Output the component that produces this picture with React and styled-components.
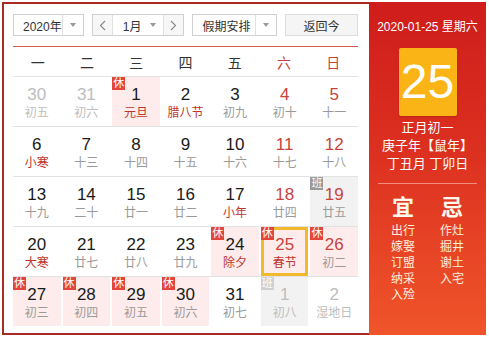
import React from 'react'
import styled, { createGlobalStyle, css } from 'styled-components'

const GlobalStyle = createGlobalStyle`
  html, body {
    margin: 0;
    padding: 0;
    background: #fff;
  }
  body {
    font-family: "Liberation Sans", "Noto Sans CJK SC", sans-serif;
  }
`

const Wrapper = styled.div`
  display: flex;
  margin: 2px;
  width: 484px;
  height: 333px;
`

const LeftPanel = styled.div`
  box-sizing: border-box;
  width: 367px;
  height: 333px;
  border: 2px solid #a82a22;
  border-right: none;
  padding: 10px 11px 7px 9px;
  background: #fff;
`

const Toolbar = styled.div`
  display: flex;
  align-items: center;
  height: 22px;
  margin-bottom: 10px;
`

const Select = styled.div`
  box-sizing: border-box;
  display: flex;
  align-items: stretch;
  height: 22px;
  width: ${({ $width }) => $width}px;
  margin-right: ${({ $gap }) => $gap}px;
  border: 1px solid #d0d0d0;
  background: #fff;
  font-size: 12px;
  color: #333;
`

const SelectText = styled.div`
  flex: 1;
  display: flex;
  align-items: center;
  padding-left: ${({ $pad }) => $pad}px;
  white-space: nowrap;
`

const ArrowBox = styled.div`
  width: 20px;
  display: flex;
  align-items: center;
  justify-content: center;
  border-left: ${({ $line }) => ($line ? '1px solid #e0e0e0' : 'none')};
  &::after {
    content: '';
    border-left: 3.5px solid transparent;
    border-right: 3.5px solid transparent;
    border-top: 4px solid #999;
  }
`

const NavButton = styled.div`
  width: 19px;
  display: flex;
  align-items: center;
  justify-content: center;
  background: #f7f7f7;
  ${({ $side }) =>
    $side === 'left'
      ? css`border-right: 1px solid #e0e0e0;`
      : css`border-left: 1px solid #e0e0e0;`}
`

const TodayButton = styled.div`
  box-sizing: border-box;
  width: 73px;
  height: 22px;
  display: flex;
  align-items: center;
  justify-content: center;
  border: 1px solid #dcdcdc;
  background: #f5f5f5;
  font-size: 12px;
  color: #333;
`

const WeekHeader = styled.div`
  display: grid;
  grid-template-columns: repeat(7, 1fr);
  height: 29px;
  border-top: 1px solid #d55a50;
`

const WeekDay = styled.div`
  display: flex;
  align-items: center;
  justify-content: center;
  font-size: 14px;
  color: ${({ $weekend }) => ($weekend ? '#c9433c' : '#333')};
`

const Row = styled.div`
  display: grid;
  grid-template-columns: repeat(7, 1fr);
  column-gap: 2px;
  height: 49px;
  border-top: 1px solid #e2e2e2;
`

const Cell = styled.div`
  position: relative;
  height: 49px;
  text-align: center;
  background: ${({ $bg }) => $bg};
  ${({ $selected }) =>
    $selected &&
    css`
      box-shadow: inset 0 0 0 3px #f1b92d;
    `}
`

const DayNum = styled.div`
  padding-top: 8px;
  font-size: 17px;
  line-height: 20px;
  color: ${({ $color }) => $color};
`

const Lunar = styled.div`
  font-size: 12px;
  line-height: 16px;
  color: ${({ $color }) => $color};
`

const Badge = styled.span`
  position: absolute;
  top: 0;
  left: 0;
  width: 13px;
  height: 13px;
  font-size: 11px;
  line-height: 13px;
  text-align: center;
  color: #fff;
  background: ${({ $bg }) => $bg};
`

const RightPanel = styled.div`
  box-sizing: border-box;
  width: 117px;
  height: 333px;
  padding-top: 17px;
  background: linear-gradient(180deg, #cf1d1b 0%, #dc3020 45%, #f0552a 100%);
  color: #fff;
  text-align: center;
`

const DateLine = styled.div`
  font-size: 12px;
  line-height: 16px;
  white-space: nowrap;
`

const BigDay = styled.div`
  width: 58px;
  height: 68px;
  margin: 13px auto 3px;
  border-radius: 2px;
  background: #fbb416;
  box-shadow: 0 1px 2px rgba(120, 20, 0, 0.3);
  font-size: 48px;
  line-height: 68px;
  color: #fff;
`

const InfoLine = styled.div`
  font-size: 13px;
  line-height: 18px;
  white-space: nowrap;
`

const Divider = styled.div`
  width: 99px;
  height: 1px;
  margin: 10px auto 0;
  background: rgba(255, 200, 190, 0.6);
`

const Almanac = styled.div`
  display: grid;
  grid-template-columns: 49px 49px;
  justify-content: center;
  margin-top: 11px;
`

const AlmanacCol = styled.div`
  display: flex;
  flex-direction: column;
  align-items: center;
`

const AlmanacTitle = styled.div`
  font-size: 22px;
  font-weight: bold;
  line-height: 26px;
  margin-bottom: 2px;
  color: #fff8ee;
`

const AlmanacItem = styled.div`
  font-size: 12px;
  line-height: 16px;
  color: #ffeede;
`

const Chevron = ({ dir }) => (
  <svg width="7" height="11" viewBox="0 0 7 11">
    <polyline
      points={dir === 'left' ? '6,1 1.5,5.5 6,10' : '1,1 5.5,5.5 1,10'}
      fill="none"
      stroke="#888"
      strokeWidth="1.1"
    />
  </svg>
)

const RED = '#c9433c'
const FEST = '#c0352d'
const GRAY = '#9a9a9a'
const PALE = '#bdbdbd'
const HOLIDAY_BG = '#fdeceb'
const WORK_BG = '#f2f2f2'

// n: day, l: lunar, o: other month, w: weekend, f: festival, h: 休, b: 班, s: selected
const weeks = [
  [
    { n: 30, l: '初五', o: 1 },
    { n: 31, l: '初六', o: 1 },
    { n: 1, l: '元旦', f: 1, h: 1 },
    { n: 2, l: '腊八节', f: 1 },
    { n: 3, l: '初九' },
    { n: 4, l: '初十', w: 1 },
    { n: 5, l: '十一', w: 1 },
  ],
  [
    { n: 6, l: '小寒', f: 1 },
    { n: 7, l: '十三' },
    { n: 8, l: '十四' },
    { n: 9, l: '十五' },
    { n: 10, l: '十六' },
    { n: 11, l: '十七', w: 1 },
    { n: 12, l: '十八', w: 1 },
  ],
  [
    { n: 13, l: '十九' },
    { n: 14, l: '二十' },
    { n: 15, l: '廿一' },
    { n: 16, l: '廿二' },
    { n: 17, l: '小年', f: 1 },
    { n: 18, l: '廿四', w: 1 },
    { n: 19, l: '廿五', w: 1, b: 1 },
  ],
  [
    { n: 20, l: '大寒', f: 1 },
    { n: 21, l: '廿七' },
    { n: 22, l: '廿八' },
    { n: 23, l: '廿九' },
    { n: 24, l: '除夕', f: 1, h: 1 },
    { n: 25, l: '春节', f: 1, h: 1, w: 1, s: 1 },
    { n: 26, l: '初二', h: 1, w: 1 },
  ],
  [
    { n: 27, l: '初三', h: 1 },
    { n: 28, l: '初四', h: 1 },
    { n: 29, l: '初五', h: 1 },
    { n: 30, l: '初六', h: 1 },
    { n: 31, l: '初七' },
    { n: 1, l: '初八', o: 1, b: 1 },
    { n: 2, l: '湿地日', o: 1 },
  ],
]

const weekNames = ['一', '二', '三', '四', '五', '六', '日']
const yi = ['出行', '嫁娶', '订盟', '纳采', '入殓']
const ji = ['作灶', '掘井', '谢土', '入宅']

function DayCell({ d }) {
  let bg = 'transparent'
  if (d.h) bg = HOLIDAY_BG
  if (d.b) bg = WORK_BG
  const numColor = d.o ? PALE : d.w ? RED : '#1a1a1a'
  const lunarColor = d.o ? PALE : d.f ? FEST : GRAY
  return (
    <Cell $bg={bg} $selected={!!d.s}>
      {d.h ? <Badge $bg="#e2463b">休</Badge> : null}
      {d.b ? <Badge $bg={d.o ? '#cfcfcf' : '#999'}>班</Badge> : null}
      <DayNum $color={numColor}>{d.n}</DayNum>
      <Lunar $color={lunarColor}>{d.l}</Lunar>
    </Cell>
  )
}

export default function App() {
  return (
    <>
      <GlobalStyle />
      <Wrapper>
        <LeftPanel>
          <Toolbar>
            <Select $width={71} $gap={8}>
              <SelectText $pad={9}>2020年</SelectText>
              <ArrowBox $line />
            </Select>
            <Select $width={93} $gap={8}>
              <NavButton $side="left">
                <Chevron dir="left" />
              </NavButton>
              <SelectText $pad={10}>1月</SelectText>
              <ArrowBox />
              <NavButton $side="right">
                <Chevron dir="right" />
              </NavButton>
            </Select>
            <Select $width={85} $gap={8}>
              <SelectText $pad={9}>假期安排</SelectText>
              <ArrowBox $line />
            </Select>
            <TodayButton>返回今</TodayButton>
          </Toolbar>
          <WeekHeader>
            {weekNames.map((w, i) => (
              <WeekDay key={w} $weekend={i > 4}>
                {w}
              </WeekDay>
            ))}
          </WeekHeader>
          {weeks.map((week, i) => (
            <Row key={i}>
              {week.map((d, j) => (
                <DayCell key={j} d={d} />
              ))}
            </Row>
          ))}
        </LeftPanel>
        <RightPanel>
          <DateLine>2020-01-25 星期六</DateLine>
          <BigDay>25</BigDay>
          <InfoLine>正月初一</InfoLine>
          <InfoLine>庚子年【鼠年】</InfoLine>
          <InfoLine>丁丑月 丁卯日</InfoLine>
          <Divider />
          <Almanac>
            <AlmanacCol>
              <AlmanacTitle>宜</AlmanacTitle>
              {yi.map((t) => (
                <AlmanacItem key={t}>{t}</AlmanacItem>
              ))}
            </AlmanacCol>
            <AlmanacCol>
              <AlmanacTitle>忌</AlmanacTitle>
              {ji.map((t) => (
                <AlmanacItem key={t}>{t}</AlmanacItem>
              ))}
            </AlmanacCol>
          </Almanac>
        </RightPanel>
      </Wrapper>
    </>
  )
}
